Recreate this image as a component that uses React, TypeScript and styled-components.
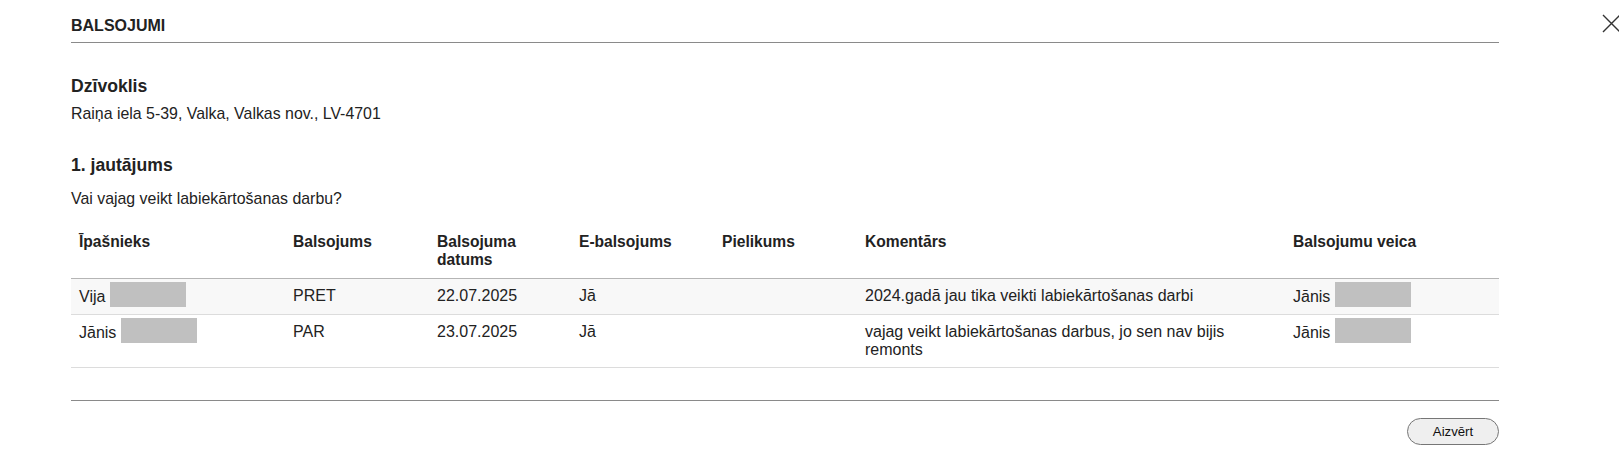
import React from 'react';
import styled, { createGlobalStyle } from 'styled-components';

const GlobalStyle = createGlobalStyle`
  html, body {
    margin: 0;
    padding: 0;
    background: #fff;
  }
  body {
    font-family: "Liberation Sans", Arial, sans-serif;
    color: #222;
    font-size: 16px;
  }
`;

type Column = { title: string; width: number };

type Vote = {
  owner: string;
  vote: string;
  date: string;
  eVote: string;
  attachment: string;
  comment: string;
  votedBy: string;
  shade?: boolean;
};

const columns: Column[] = [
  { title: 'Īpašnieks', width: 214 },
  { title: 'Balsojums', width: 144 },
  { title: 'Balsojuma datums', width: 142 },
  { title: 'E-balsojums', width: 143 },
  { title: 'Pielikums', width: 143 },
  { title: 'Komentārs', width: 428 },
  { title: 'Balsojumu veica', width: 214 },
];

const votes: Vote[] = [
  {
    owner: 'Vija',
    vote: 'PRET',
    date: '22.07.2025',
    eVote: 'Jā',
    attachment: '',
    comment: '2024.gadā jau tika veikti labiekārtošanas darbi',
    votedBy: 'Jānis',
    shade: true,
  },
  {
    owner: 'Jānis',
    vote: 'PAR',
    date: '23.07.2025',
    eVote: 'Jā',
    attachment: '',
    comment: 'vajag veikt labiekārtošanas darbus, jo sen nav bijis remonts',
    votedBy: 'Jānis',
  },
];

const Page = styled.div`
  position: relative;
  width: 1619px;
  height: 459px;
  overflow: hidden;
`;

const CloseIcon = styled.button`
  position: absolute;
  top: 14px;
  left: 1602px;
  width: 19px;
  height: 19px;
  padding: 0;
  border: 0;
  background: none;
  cursor: pointer;
  svg {
    display: block;
  }
`;

const Modal = styled.div`
  margin-left: 71px;
  width: 1428px;
`;

const Header = styled.div`
  padding: 16px 0 6px;
  line-height: 20px;
  font-size: 16px;
  font-weight: bold;
  border-bottom: 1px solid #8a8a8a;
`;

const Body = styled.div`
  padding-top: 32px;
  padding-bottom: 32px;
  border-bottom: 1px solid #8a8a8a;
`;

const SectionTitle = styled.h3<{ $gap: number }>`
  margin: ${p => p.$gap}px 0 0;
  font-size: 17.6px;
  line-height: 22px;
  font-weight: bold;
`;

const Text = styled.p<{ $gap: number }>`
  margin: ${p => p.$gap}px 0 0;
  font-size: 15.9px;
  line-height: 20px;
`;

const Table = styled.table`
  margin-top: 16px;
  width: 100%;
  table-layout: fixed;
  border-collapse: collapse;
  line-height: 18px;
`;

const Th = styled.th`
  text-align: left;
  vertical-align: top;
  font-size: 15.6px;
  font-weight: bold;
  padding: 8px 8px 9px;
  border-bottom: 1px solid #b5b5b5;
`;

const Row = styled.tr<{ $shade?: boolean }>`
  background: ${p => (p.$shade ? '#f8f8f8' : '#fff')};
  border-bottom: 1px solid #dcdcdc;
`;

const Td = styled.td`
  text-align: left;
  vertical-align: top;
  font-size: 16px;
  padding: 8px;
`;

const Hidden = styled.span`
  display: inline-block;
  width: 76px;
  height: 25px;
  margin: -5px 0 -4px 0;
  vertical-align: -1px;
  background: #c0c0c0;
`;

const Footer = styled.div`
  display: flex;
  justify-content: flex-end;
  padding-top: 17px;
`;

const Button = styled.button`
  width: 92px;
  height: 27px;
  border: 1px solid #767676;
  border-radius: 14px;
  background: #efefef;
  color: #111;
  font-family: "Liberation Sans", Arial, sans-serif;
  font-size: 13.2px;
  cursor: pointer;
`;

const Person: React.FC<{ name: string }> = ({ name }) => (
  <>
    {name} <Hidden />
  </>
);

const App: React.FC = () => (
  <Page>
    <GlobalStyle />
    <CloseIcon aria-label="Aizvērt">
      <svg width="19" height="19" viewBox="0 0 19 19">
        <path d="M1 1 L18 18 M18 1 L1 18" stroke="#333" strokeWidth="1.4" fill="none" />
      </svg>
    </CloseIcon>
    <Modal>
      <Header>BALSOJUMI</Header>
      <Body>
        <SectionTitle $gap={0}>Dzīvoklis</SectionTitle>
        <Text $gap={7}>Raiņa iela 5-39, Valka, Valkas nov., LV-4701</Text>
        <SectionTitle $gap={30}>1. jautājums</SectionTitle>
        <Text $gap={13}>Vai vajag veikt labiekārtošanas darbu?</Text>
        <Table>
          <colgroup>
            {columns.map(c => (
              <col key={c.title} style={{ width: c.width }} />
            ))}
          </colgroup>
          <thead>
            <tr>
              {columns.map(c => (
                <Th key={c.title}>{c.title}</Th>
              ))}
            </tr>
          </thead>
          <tbody>
            {votes.map((v, i) => (
              <Row key={i} $shade={v.shade}>
                <Td>
                  <Person name={v.owner} />
                </Td>
                <Td>{v.vote}</Td>
                <Td>{v.date}</Td>
                <Td>{v.eVote}</Td>
                <Td>{v.attachment}</Td>
                <Td>{v.comment}</Td>
                <Td>
                  <Person name={v.votedBy} />
                </Td>
              </Row>
            ))}
          </tbody>
        </Table>
      </Body>
      <Footer>
        <Button>Aizvērt</Button>
      </Footer>
    </Modal>
  </Page>
);

export default App;
